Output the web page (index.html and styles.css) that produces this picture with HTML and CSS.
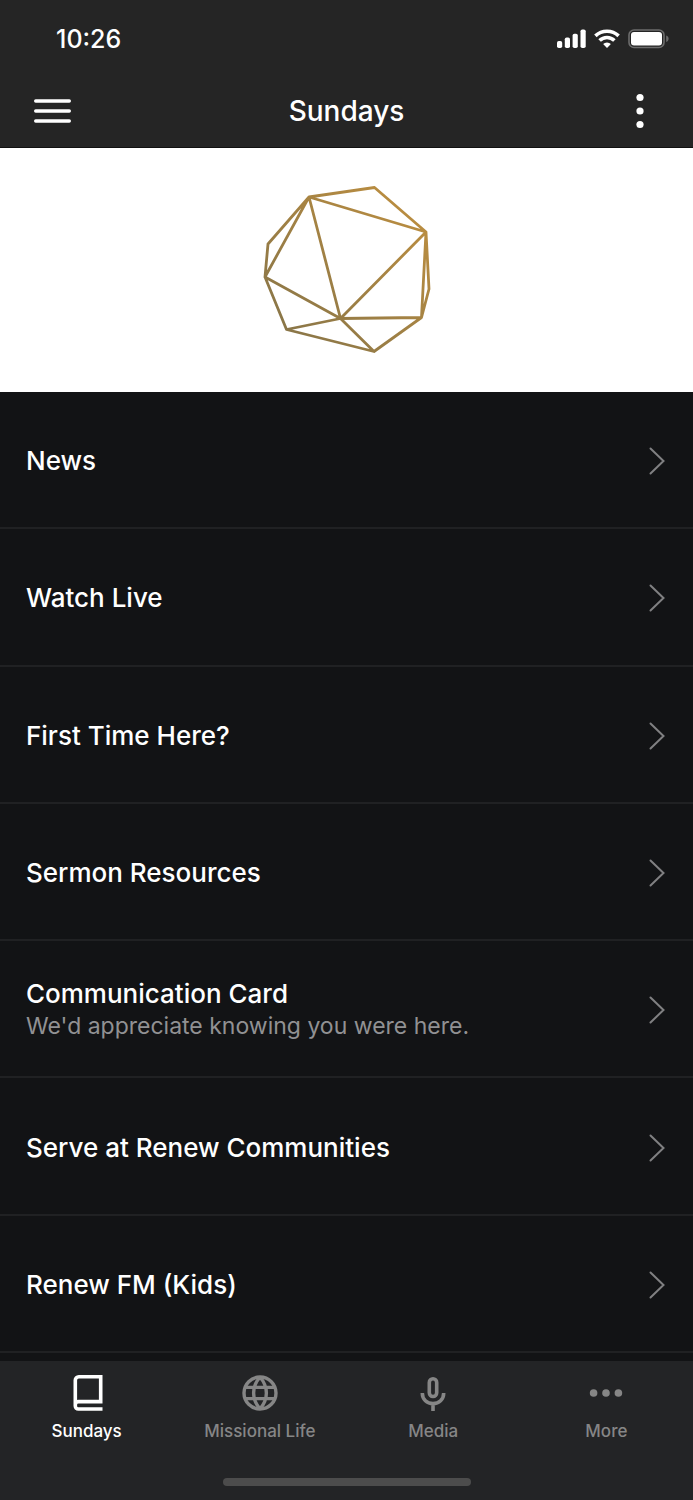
FILE: index.html
```html
<!DOCTYPE html>
<html lang="en">
<head>
<meta charset="utf-8">
<meta name="viewport" content="width=device-width, initial-scale=1">
<title>Sundays</title>
<link rel="stylesheet" href="styles.css">
</head>
<body>
<header class="top">
  <div class="status">
    <time class="clock">10:26</time>
    <div class="indicators">
      <svg width="30" height="20" viewBox="0 0 30 20" fill="#fff" role="img" aria-label="Signal">
        <rect x="1" y="12" width="5.200" height="7" rx="1.800"/><rect x="8.800" y="8.500" width="5.200" height="10.500" rx="1.800"/><rect x="16.600" y="4.800" width="5.200" height="14.200" rx="1.800"/><rect x="24.500" y="0.500" width="5.200" height="18.500" rx="1.800"/>
      </svg>
      <svg width="26" height="20" viewBox="0 0 26 20" role="img" aria-label="Wi-Fi">
        <g fill="none" stroke="#fff" stroke-width="3.600"><path d="M1.400 6.900a16.800 16.800 0 0 1 23.200 0"/><path d="M5.600 11.500a10.500 10.500 0 0 1 14.800 0"/></g>
        <path fill="#fff" d="M13 18.900l-3.900-3.900a5.500 5.500 0 0 1 7.800 0z"/>
      </svg>
      <svg width="41" height="20" viewBox="0 0 41 20" role="img" aria-label="Battery">
        <rect x="1" y="1" width="35" height="17.500" rx="5" fill="none" stroke="#6c6c6c" stroke-width="1.600"/>
        <rect x="3" y="3" width="31" height="13.500" rx="3" fill="#fff"/>
        <path d="M38.200 6.500c1.600.6 2.400 1.800 2.400 3.300s-.8 2.700-2.400 3.300z" fill="#6c6c6c"/>
      </svg>
    </div>
  </div>
  <div class="navbar">
    <button class="icon-button" type="button" aria-label="Menu">
      <svg width="37" height="26" viewBox="0 0 37 26" stroke="#fff" stroke-width="3.400" stroke-linecap="round"><path d="M1.700 3h33.600M1.700 13h33.600M1.700 23h33.600"/></svg>
    </button>
    <h1 class="title">Sundays</h1>
    <button class="icon-button" type="button" aria-label="Options">
      <svg width="37" height="36" viewBox="0 0 37 36" fill="#fff"><circle cx="18" cy="4.500" r="3.600"/><circle cx="18" cy="18" r="3.600"/><circle cx="18" cy="31.500" r="3.600"/></svg>
    </button>
  </div>
</header>
<main class="content">
  <div class="hero">
    <svg width="168" height="168" viewBox="263 185 168 168" fill="none" role="img" aria-label="Renew Communities">
      <defs><linearGradient id="gold" gradientUnits="userSpaceOnUse" x1="285" y1="330" x2="410" y2="205"><stop offset="0" stop-color="#8a7648"/><stop offset="1" stop-color="#ba8d40"/></linearGradient></defs>
      <path stroke="url(#gold)" stroke-width="2.800" stroke-linejoin="round" d="M309 197L374.500 187.500L426 232L429 289L421.500 317.500L374 351.500L286.500 329.500L265 277L268 244ZL426 232L340.500 318.500L309 197L265 277L340.500 318.500L421.500 317.500L426 232M286.500 329.500L340.500 318.500L374 351.500"/>
    </svg>
  </div>
  <nav class="list" aria-label="Sections">
    <a class="row" href="#news"><span class="row-title">News</span><svg class="chevron" viewBox="0 0 16 28"><path d="M1.500 1.500L14.500 14L1.500 26.500"/></svg></a>
    <a class="row" href="#live"><span class="row-title">Watch Live</span><svg class="chevron" viewBox="0 0 16 28"><path d="M1.500 1.500L14.500 14L1.500 26.500"/></svg></a>
    <a class="row" href="#first"><span class="row-title">First Time Here?</span><svg class="chevron" viewBox="0 0 16 28"><path d="M1.500 1.500L14.500 14L1.500 26.500"/></svg></a>
    <a class="row" href="#sermons"><span class="row-title">Sermon Resources</span><svg class="chevron" viewBox="0 0 16 28"><path d="M1.500 1.500L14.500 14L1.500 26.500"/></svg></a>
    <a class="row" href="#card"><span class="row-text"><span class="row-title">Communication Card</span><span class="row-note">We'd appreciate knowing you were here.</span></span><svg class="chevron" viewBox="0 0 16 28"><path d="M1.500 1.500L14.500 14L1.500 26.500"/></svg></a>
    <a class="row" href="#serve"><span class="row-title">Serve at Renew Communities</span><svg class="chevron" viewBox="0 0 16 28"><path d="M1.500 1.500L14.500 14L1.500 26.500"/></svg></a>
    <a class="row" href="#kids"><span class="row-title">Renew FM (Kids)</span><svg class="chevron" viewBox="0 0 16 28"><path d="M1.500 1.500L14.500 14L1.500 26.500"/></svg></a>
  </nav>
</main>
<footer class="bottom">
  <nav class="tabs" aria-label="Main">
    <a class="tab tab-active" href="#sundays" aria-current="page">
      <svg class="tab-icon" viewBox="0 0 36 36"><path fill="none" stroke="currentColor" stroke-width="3.600" d="M33.500 34H9.300a3 3 0 0 1-3-3V5.300a3.500 3.500 0 0 1 3.500-3.500H31.700V26.600H9.500a3.200 3.200 0 0 0-3.200 3.200"/></svg>
      <span>Sundays</span>
    </a>
    <a class="tab" href="#missional">
      <svg class="tab-icon" viewBox="0 0 36 36" fill="none" stroke="currentColor" stroke-width="3.400"><circle cx="18" cy="18" r="16"/><path d="M18 2C9.500 12 9.500 24 18 34M18 2C26.500 12 26.500 24 18 34M3 12.400H33M3 23.600H33"/></svg>
      <span>Missional Life</span>
    </a>
    <a class="tab" href="#media">
      <svg class="tab-icon" viewBox="0 0 36 36" fill="none" stroke="currentColor" stroke-width="3.600"><rect x="14.300" y="3.700" width="7.400" height="17.800" rx="3.700"/><path d="M7.300 18C7.300 24.500 12 28.600 18 28.600S28.700 24.500 28.700 18M18 28.600V36"/></svg>
      <span>Media</span>
    </a>
    <a class="tab" href="#more">
      <svg class="tab-icon" viewBox="0 0 36 36" fill="currentColor"><circle cx="5.600" cy="18" r="3.800"/><circle cx="18" cy="18" r="3.800"/><circle cx="30.400" cy="18" r="3.800"/></svg>
      <span>More</span>
    </a>
  </nav>
  <div class="home-bar"></div>
</footer>
</body>
</html>
```
FILE: styles.css
```css
* {
  box-sizing: border-box;
}

body {
  display: flex;
  flex-direction: column;
  min-height: 100vh;
  margin: 0;
  background: #121315;
  color: #fff;
  font-family: Inter, "Liberation Sans", sans-serif;
}

a {
  color: inherit;
  text-decoration: none;
}

svg {
  display: block;
  flex: none;
}

.top {
  background: #252525;
  border-bottom: 1px solid #111;
}

.status {
  display: flex;
  align-items: center;
  justify-content: space-between;
  height: 74px;
  padding: 4px 24px 0 56px;
}

.clock {
  font-size: 25px;
  font-weight: 500;
}

.indicators {
  display: flex;
  gap: 8px;
}

.navbar {
  display: flex;
  align-items: center;
  justify-content: space-between;
  height: 73px;
  padding: 0 34px;
}

.icon-button {
  padding: 0;
  border: 0;
  background: none;
}

.title {
  margin: 0;
  font-size: 28px;
  font-weight: 500;
}

.content {
  display: flex;
  flex: 1;
  flex-direction: column;
}

.hero {
  display: flex;
  justify-content: center;
  padding: 37px 0 39px;
  background: #fff;
}

.list {
  display: grid;
  flex: 1;
  grid-auto-rows: 1fr;
  padding-bottom: 8px;
}

.row {
  display: flex;
  align-items: center;
  justify-content: space-between;
  padding: 3px 28px 0 26px;
  border-bottom: 2px solid #202123;
}

.row-text {
  display: flex;
  flex-direction: column;
}

.row-title {
  font-size: 26px;
  font-weight: 500;
  line-height: 32px;
}

.row-note {
  color: #919193;
  font-size: 23px;
  line-height: 32px;
}

.chevron {
  width: 16px;
  height: 28px;
  fill: none;
  stroke: #808082;
  stroke-width: 2;
  stroke-linecap: round;
}

.bottom {
  background: #232426;
}

.tabs {
  display: grid;
  grid-template-columns: repeat(4, 1fr);
  padding-top: 14px;
}

.tab {
  display: flex;
  flex-direction: column;
  align-items: center;
  gap: 8px;
  color: #868686;
  font-size: 17px;
  font-weight: 500;
  line-height: 24px;
}

.tab-active {
  color: #fff;
}

.tab-icon {
  width: 36px;
  height: 36px;
}

.home-bar {
  width: 248px;
  height: 8px;
  margin: 35px auto 14px;
  border-radius: 4px;
  background: #4c4c4c;
}
```
